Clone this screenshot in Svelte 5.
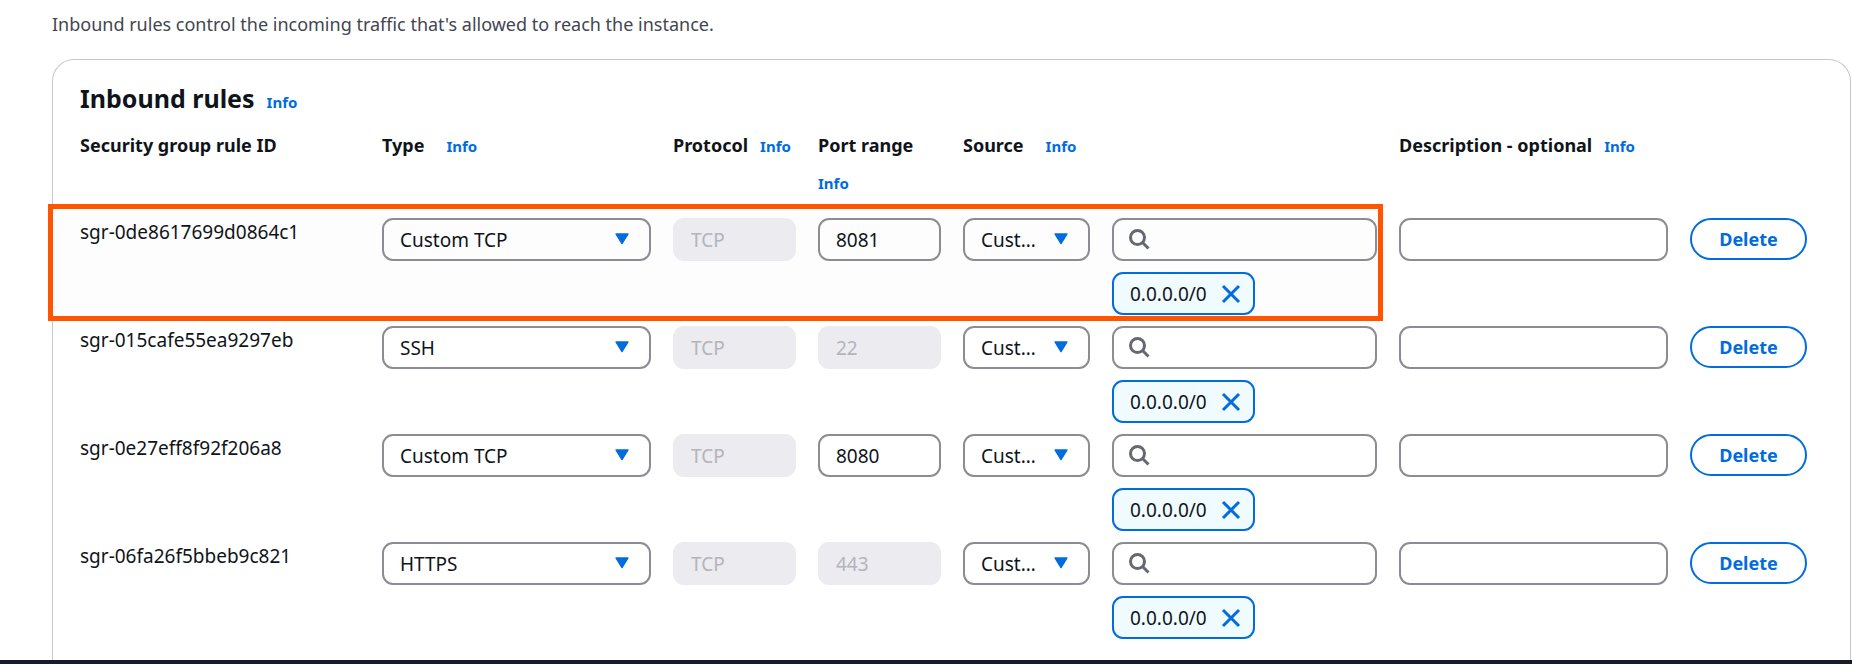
<script>
  let rules = $state([
    { id: 'sgr-0de8617699d0864c1', type: 'Custom TCP', port: '8081', source: 'Custom', cidr: '0.0.0.0/0', marked: true },
    { id: 'sgr-015cafe55ea9297eb', type: 'SSH', port: '22', source: 'Custom', cidr: '0.0.0.0/0', marked: false },
    { id: 'sgr-0e27eff8f92f206a8', type: 'Custom TCP', port: '8080', source: 'Custom', cidr: '0.0.0.0/0', marked: false },
    { id: 'sgr-06fa26f5bbeb9c821', type: 'HTTPS', port: '443', source: 'Custom', cidr: '0.0.0.0/0', marked: false }
  ]);
  const types = ['Custom TCP', 'SSH', 'HTTPS'];
  const sources = ['Custom', 'Anywhere-IPv4', 'My IP'];
</script>

{#snippet caret()}
  <svg class="caret" viewBox="0 0 14 12" aria-hidden="true">
    <path d="M1 1h12L7 10.6z" fill="currentColor" stroke="currentColor" stroke-width="1.4" stroke-linejoin="round" />
  </svg>
{/snippet}

<div class="page">
  <p class="intro">Inbound rules control the incoming traffic that's allowed to reach the instance.</p>

  <section class="card">
    <header class="title">
      <h2>Inbound rules</h2>
      <a href="#info">Info</a>
    </header>

    <table>
      <thead>
        <tr>
          <th scope="col">Security group rule ID</th>
          <th scope="col" class="spaced">Type <a href="#type">Info</a></th>
          <th scope="col">Protocol <a href="#protocol">Info</a></th>
          <th scope="col">Port range <a href="#port">Info</a></th>
          <th scope="col" class="wide spaced" colspan="2">Source <a href="#source">Info</a></th>
          <th scope="col">Description - optional <a href="#description">Info</a></th>
        </tr>
      </thead>
      <tbody>
        {#each rules as rule (rule.id)}
          <tr class:marked={rule.marked}>
            <td class="id">{rule.id}</td>
            <td>
              <div class="select">
                <select aria-label="Type" bind:value={rule.type}>
                  {#each types as t}<option>{t}</option>{/each}
                </select>
                {@render caret()}
              </div>
            </td>
            <td><input aria-label="Protocol" value="TCP" disabled /></td>
            <td><input aria-label="Port range" bind:value={rule.port} disabled={rule.type !== 'Custom TCP'} /></td>
            <td>
              <div class="select">
                <select aria-label="Source type" bind:value={rule.source}>
                  {#each sources as s}<option>{s}</option>{/each}
                </select>
                {@render caret()}
              </div>
            </td>
            <td class="source">
              <div class="search">
                <svg viewBox="0 0 22 22" aria-hidden="true">
                  <circle cx="9.5" cy="9.5" r="7" />
                  <path d="M14.5 14.5l6 6" />
                </svg>
                <input type="search" aria-label="Source" />
              </div>
              <span class="token">
                {rule.cidr}
                <button class="remove" aria-label="Remove">
                  <svg viewBox="0 0 20 20" aria-hidden="true"><path d="M2 2l16 16M18 2L2 18" /></svg>
                </button>
              </span>
            </td>
            <td><input aria-label="Description" /></td>
            <td>
              <button class="delete" onclick={() => (rules = rules.filter((r) => r.id !== rule.id))}>Delete</button>
            </td>
          </tr>
        {/each}
      </tbody>
    </table>
  </section>
  <footer></footer>
</div>

<style>
  :global(body) {
    background: #fff;
  }
  .page,
  .page * {
    box-sizing: border-box;
  }
  .page {
    display: flex;
    flex-direction: column;
    min-height: 100vh;
    color: #0f141a;
    font-family: 'Noto Sans', sans-serif;
    font-size: 18px;
    line-height: 24px;
  }
  .intro {
    margin: 12px 0 23px 52px;
    color: #424650;
  }
  .card {
    flex: 1;
    margin: 0 1px 0 52px;
    padding: 23px 43px 14px 27px;
    border: 1px solid #c6c6cd;
    border-bottom: 0;
    border-radius: 22px 22px 0 0;
  }
  .title {
    display: flex;
    align-items: baseline;
    gap: 12px;
    line-height: 30px;
  }
  h2 {
    margin: 0;
    font-size: 25px;
    line-height: 30px;
  }
  a {
    color: #006ce0;
    font-size: 15px;
    font-weight: 700;
    text-decoration: none;
  }
  table,
  thead,
  tbody {
    display: block;
  }
  thead {
    margin: 9px 0 16px;
  }
  tbody {
    display: grid;
    gap: 11px;
    font-size: 19px;
  }
  tr {
    position: relative;
    display: grid;
    grid-template-columns: 280fr 269fr 123fr 123fr 127fr 265fr 269fr 117fr;
    column-gap: 22px;
  }
  th,
  td {
    display: block;
    min-width: 0;
    padding: 0;
    text-align: left;
  }
  th {
    display: flex;
    flex-wrap: wrap;
    align-items: baseline;
    align-content: start;
    column-gap: 12px;
    line-height: 38px;
  }
  .spaced {
    column-gap: 22px;
  }
  .wide {
    grid-column: span 2;
  }
  .id {
    padding-top: 2px;
  }
  .marked::before {
    content: '';
    position: absolute;
    inset: -14px -6px -6px -32px;
    grid-column: 1 / 7;
    border: 5px solid #ff5500;
    background: #fdfdfd;
  }
  .marked td {
    position: relative;
  }
  input,
  select {
    display: block;
    width: 100%;
    height: 43px;
    margin: 0;
    padding: 0 16px;
    border: 2px solid #8c8c94;
    border-radius: 11px;
    background: transparent;
    color: inherit;
    font: inherit;
    appearance: none;
  }
  input:disabled {
    border-color: #ebebf0;
    background: #ebebf0;
    color: #b4b4bb;
  }
  .select,
  .search {
    position: relative;
  }
  select {
    padding-right: 48px;
    text-overflow: ellipsis;
  }
  .caret {
    position: absolute;
    top: 15px;
    right: 22px;
    width: 14px;
    height: 12px;
    color: #006ce0;
    pointer-events: none;
  }
  .search svg {
    position: absolute;
    top: 10px;
    left: 16px;
    width: 22px;
    height: 22px;
    fill: none;
    stroke: #656871;
    stroke-width: 3;
  }
  .search input {
    padding-left: 44px;
  }
  .source {
    display: grid;
    gap: 11px;
    justify-items: start;
  }
  .search {
    width: 100%;
  }
  .token {
    display: flex;
    align-items: center;
    gap: 14px;
    height: 43px;
    padding: 0 12px 0 16px;
    border: 2px solid #006ce0;
    border-radius: 11px;
    background: #f0fbff;
  }
  .remove {
    display: flex;
    padding: 0;
    border: 0;
    background: none;
  }
  .remove svg {
    width: 20px;
    height: 20px;
    fill: none;
    stroke: #006ce0;
    stroke-width: 3;
  }
  .delete {
    width: 100%;
    height: 42px;
    padding: 0;
    border: 2px solid #006ce0;
    border-radius: 21px;
    background: #fff;
    color: #006ce0;
    font: inherit;
    font-size: 18px;
    font-weight: 700;
  }
  footer {
    height: 4px;
    background: #161d2a;
  }
</style>
